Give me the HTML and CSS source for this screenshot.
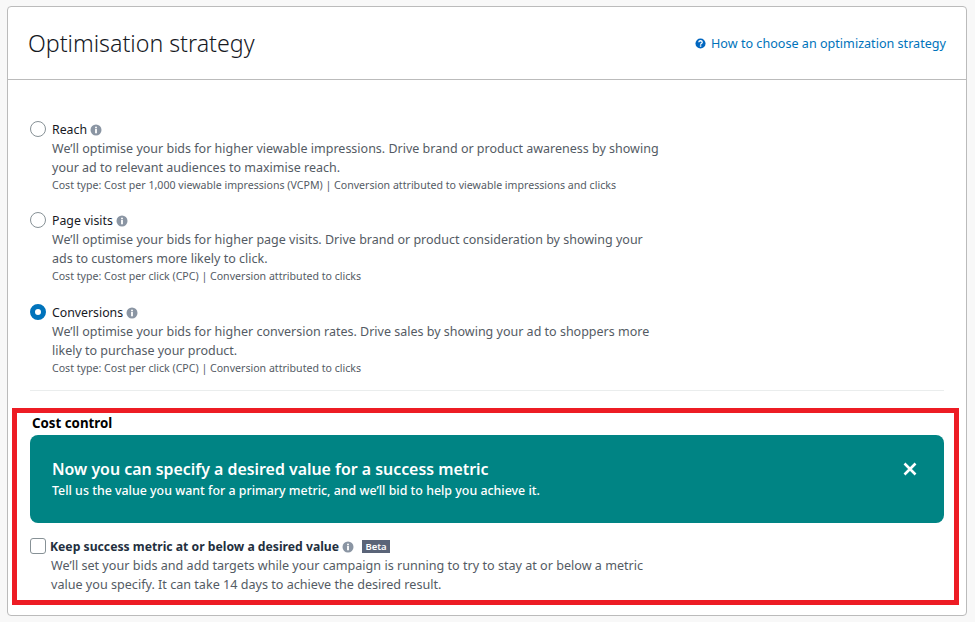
FILE: index.html
```html
<!DOCTYPE html>
<html lang="en">

<head>
    <meta charset="UTF-8">
    <title>Optimisation strategy</title>

    <link rel="stylesheet" href="styles.css">
</head>

<body>
    <div class="card">
        <div class="card-header">
            <h1>Optimisation strategy</h1>
            <a class="help-link" href="#">
                <svg class="help-icon" viewBox="0 0 12 12">
                    <circle cx="6" cy="6" r="5.5" fill="#0066c0"/>
                    <path d="M4.1 4.7C4.2 3.6 5 3 6 3c1.1 0 1.9.6 1.9 1.6 0 1.5-1.8 1.4-1.8 2.7" fill="none" stroke="#fff" stroke-width="1.4"/>
                    <rect x="5.3" y="8" width="1.6" height="1.5" fill="#fff"/>
                </svg>
                How to choose an optimization strategy
            </a>
        </div>

        <div class="card-body">
            <div class="option">
                <span class="radio"></span>
                <div class="option-text">
                    <div class="option-title">Reach
                        <svg class="info-icon" viewBox="0 0 12 12"><circle cx="6" cy="6" r="5.5" fill="#8a95a3"/><rect x="5.1" y="5" width="1.8" height="4.3" fill="#fff"/><rect x="5.1" y="2.7" width="1.8" height="1.6" fill="#fff"/></svg>
                    </div>
                    <p>We’ll optimise your bids for higher viewable impressions. Drive brand or product awareness by showing<br>your ad to relevant audiences to maximise reach.</p>
                    <small>Cost type: Cost per 1,000 viewable impressions (VCPM) | Conversion attributed to viewable impressions and clicks</small>
                </div>
            </div>

            <div class="option">
                <span class="radio"></span>
                <div class="option-text">
                    <div class="option-title">Page visits
                        <svg class="info-icon" viewBox="0 0 12 12"><circle cx="6" cy="6" r="5.5" fill="#8a95a3"/><rect x="5.1" y="5" width="1.8" height="4.3" fill="#fff"/><rect x="5.1" y="2.7" width="1.8" height="1.6" fill="#fff"/></svg>
                    </div>
                    <p>We’ll optimise your bids for higher page visits. Drive brand or product consideration by showing your<br>ads to customers more likely to click.</p>
                    <small>Cost type: Cost per click (CPC) | Conversion attributed to clicks</small>
                </div>
            </div>

            <div class="option">
                <span class="radio checked"></span>
                <div class="option-text">
                    <div class="option-title">Conversions
                        <svg class="info-icon" viewBox="0 0 12 12"><circle cx="6" cy="6" r="5.5" fill="#8a95a3"/><rect x="5.1" y="5" width="1.8" height="4.3" fill="#fff"/><rect x="5.1" y="2.7" width="1.8" height="1.6" fill="#fff"/></svg>
                    </div>
                    <p>We’ll optimise your bids for higher conversion rates. Drive sales by showing your ad to shoppers more<br>likely to purchase your product.</p>
                    <small>Cost type: Cost per click (CPC) | Conversion attributed to clicks</small>
                </div>
            </div>

            <hr class="divider">

            <h2 class="section-title">Cost control</h2>

            <div class="banner">
                <div>
                    <h3>Now you can specify a desired value for a success metric</h3>
                    <p>Tell us the value you want for a primary metric, and we’ll bid to help you achieve it.</p>
                </div>
                <svg class="banner-close" viewBox="0 0 14 14"><path d="M1.5 1.5l11 11M12.5 1.5l-11 11" stroke="#fff" stroke-width="2.6" fill="none"/></svg>
            </div>

            <div class="metric">
                <span class="checkbox"></span>
                <div class="option-text">
                    <div class="metric-title">Keep success metric at or below a desired value
                        <svg class="info-icon" viewBox="0 0 12 12"><circle cx="6" cy="6" r="5.5" fill="#8a95a3"/><rect x="5.1" y="5" width="1.8" height="4.3" fill="#fff"/><rect x="5.1" y="2.7" width="1.8" height="1.6" fill="#fff"/></svg>
                        <span class="badge">Beta</span>
                    </div>
                    <p>We’ll set your bids and add targets while your campaign is running to try to stay at or below a metric<br>value you specify. It can take 14 days to achieve the desired result.</p>
                </div>
            </div>
        </div>

        <div class="highlight"></div>
    </div>
</body>

</html>
```

FILE: styles.css
```css
body {
    font-family: "Noto Sans", Arial, sans-serif;
    font-size: 12.5px;
    background-color: #f8f8f8;
    color: #16191f;
    margin: 0;
    padding: 6px 8px 6px 7px;
}

.card {
    position: relative;
    height: 610px;
    box-sizing: border-box;
    background-color: #fff;
    border: 1px solid #bbb;
    border-radius: 4px;
}

.card-header {
    display: flex;
    justify-content: space-between;
    align-items: center;
    height: 72px;
    padding: 0 20px;
    border-bottom: 1px solid #bbb;
}

.card-header h1 {
    font-size: 23.2px;
    font-weight: 300;
    margin: 0;
}

.help-link {
    display: flex;
    align-items: center;
    gap: 5px;
    font-size: 12.6px;
    color: #0073bb;
    text-decoration: none;
}

.help-icon {
    width: 11px;
    height: 11px;
}

.card-body {
    padding: 40px 22px 0;
}

.option {
    display: flex;
    gap: 6px;
    height: 92px;
}

.option:first-child {
    height: 91px;
}

.radio {
    width: 16px;
    height: 16px;
    box-sizing: border-box;
    margin-top: 1px;
    background-color: #fff;
    border: 1px solid #879196;
    border-radius: 50%;
    flex: none;
}

.radio.checked {
    border: 5px solid #0073bb;
}

.option-text {
    color: #545b64;
}

.option-title {
    color: #16191f;
    font-size: 12.3px;
    line-height: 19px;
}

.option-text p {
    margin: 0;
    line-height: 19px;
}

.option-text small {
    display: block;
    font-size: 10.6px;
    line-height: 16px;
}

.info-icon {
    width: 12px;
    height: 12px;
    vertical-align: -2px;
}

.divider {
    border: 0;
    border-top: 1px solid #eaeded;
    margin: -5px 0 0;
}

.section-title {
    font-size: 13.3px;
    font-weight: 700;
    line-height: 18px;
    color: #000;
    margin: 23px 0 3px 2px;
}

.banner {
    display: flex;
    justify-content: space-between;
    align-items: center;
    height: 88px;
    padding: 0 27px 0 22px;
    background-color: #008484;
    border-radius: 8px;
    color: #fff;
}

.banner h3 {
    font-size: 15.9px;
    font-weight: 600;
    line-height: 24px;
    margin: 0;
}

.banner p {
    font-size: 12.4px;
    font-weight: 500;
    line-height: 20px;
    margin: 0;
}

.banner-close {
    width: 14px;
    height: 14px;
    margin-bottom: 20px;
}

.metric {
    display: flex;
    gap: 4px;
    margin-top: 14px;
}

.checkbox {
    width: 16px;
    height: 16px;
    box-sizing: border-box;
    margin-top: 1px;
    border: 1px solid #879196;
    border-radius: 3px;
    flex: none;
}

.metric-title {
    font-weight: 700;
    font-size: 12.2px;
    line-height: 19px;
    color: #232f3e;
}

.metric .option-text p {
    font-size: 12.6px;
    margin-left: 1px;
}

.badge {
    display: inline-block;
    background-color: #5a6478;
    color: #fff;
    font-size: 9.5px;
    font-weight: 600;
    line-height: 13px;
    padding: 0 3px;
    margin-left: 5px;
    vertical-align: 1px;
}

/* red annotation drawn over the cost control section */
.highlight {
    position: absolute;
    left: 4px;
    top: 401px;
    width: 947px;
    height: 197px;
    box-sizing: border-box;
    border: 5px solid #ed1c24;
}
```
